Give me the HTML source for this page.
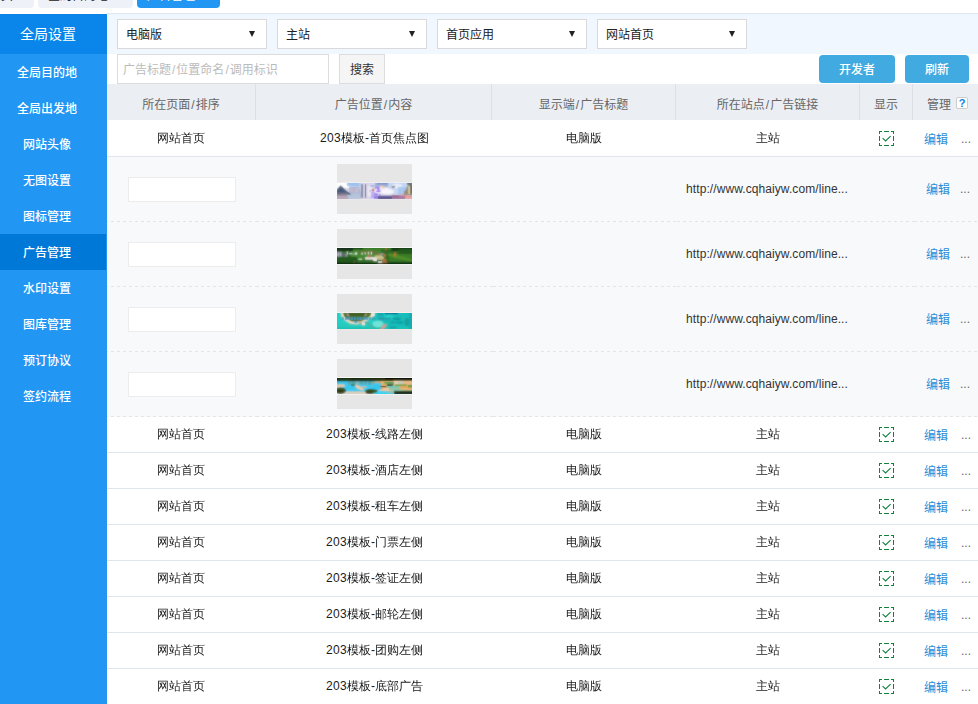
<!DOCTYPE html>
<html lang="zh-CN">
<head>
<meta charset="utf-8">
<title>广告管理</title>
<style>
*{box-sizing:border-box;margin:0;padding:0}
html,body{width:978px;height:704px;overflow:hidden;background:#fff}
body{font-family:"Liberation Sans","Noto Sans CJK SC",sans-serif;font-size:12px;color:#333;position:relative}
a{text-decoration:none;color:inherit}
ul{list-style:none}
/* top tabs */
.tabs{position:absolute;left:0;top:0;width:978px;height:13px}
.tab{position:absolute;top:-22px;height:30px;border-radius:0 0 4px 4px;background:#eef1f8;color:#222;font-size:12px;line-height:30px;text-align:left;padding-left:10px;overflow:hidden;white-space:nowrap}
.tab span{position:relative;top:3px;display:block}
.tab.t1{left:-21px;width:55px}
.tab.t2{left:38px;width:95px}
.tab.t3{left:137px;width:83px;background:#2196f3;color:#fff}
.topline{position:absolute;left:107px;top:13px;width:871px;height:1px;background:#dde6f3}
/* sidebar */
.side{position:absolute;left:0;top:14px;width:107px;height:690px;background:#2196f3;color:#fff;font-weight:500}
.side h2{height:40px;line-height:40px;width:96px;text-align:center;font-size:14px;font-weight:normal;background:#0a85e9;width:107px;padding-right:11px}
.side li{height:36px;width:106px;line-height:38px;text-align:center;padding-right:12px}
.side li.on{background:#0078d7}
/* filter */
.filter{position:absolute;left:107px;top:14px;width:871px;height:40px;background:#f0f7ff}
.sel{position:absolute;top:5px;width:150px;height:30px;border:1px solid #d9d9d9;background:#fff;line-height:30px;padding-left:8px;color:#222}
.sel i{position:absolute;left:131px;top:11px;width:0;height:0;border-left:3.5px solid transparent;border-right:3.5px solid transparent;border-top:6px solid #222}
.search{position:absolute;left:117px;top:54px;width:212px;height:30px;border:1px solid #dcdcdc;background:#fff;line-height:30px;padding-left:5px;color:#bbb}
.search i,th i{font-style:normal;margin:0 1px}
.sbtn{position:absolute;left:339px;top:54px;width:46px;height:30px;border:1px solid #dcdcde;background:#f5f5f5;line-height:30px;text-align:center;color:#333}
.btn{position:absolute;top:55px;height:28px;border-radius:4px;background:#41abe1;color:#fff;line-height:30px;text-align:center;font-weight:500}
.btn.b1{left:819px;width:76px}
.btn.b2{left:905px;width:64px}
/* table */
table{position:absolute;left:107px;top:84px;width:871px;border-collapse:separate;border-spacing:0;table-layout:fixed}
th{height:36px;background:#ebeef3;color:#666;font-weight:normal;text-align:center;border-left:1px solid #dcdfe5;padding:2px 0 0}
th:first-child{border-left:0}
td{text-align:center;padding:0;vertical-align:middle;white-space:nowrap;overflow:hidden}
tbody td{font-family:"Liberation Sans","WenQuanYi Zen Hei",sans-serif;color:#1a1a1a}
tr.r td{height:36px;border-bottom:1px solid #e1e6ee;background:#fff}
tr.r.first td{height:37px}
tr.s{background:repeating-linear-gradient(90deg,#e5e5e5 0,#e5e5e5 3px,transparent 3px,transparent 6px) -2px 64px/153px 1px no-repeat,repeating-linear-gradient(90deg,#e5e5e5 0,#e5e5e5 3px,transparent 3px,transparent 6px) 149px 64px/237px 1px no-repeat,repeating-linear-gradient(90deg,#e5e5e5 0,#e5e5e5 3px,transparent 3px,transparent 6px) 386px 64px/183px 1px no-repeat,repeating-linear-gradient(90deg,#e5e5e5 0,#e5e5e5 3px,transparent 3px,transparent 6px) 570px 64px/183px 1px no-repeat,repeating-linear-gradient(90deg,#e5e5e5 0,#e5e5e5 3px,transparent 3px,transparent 6px) 751px 64px/57px 1px no-repeat,repeating-linear-gradient(90deg,#e5e5e5 0,#e5e5e5 3px,transparent 3px,transparent 6px) 807px 64px/64px 1px no-repeat,#f8f9fb}
tr.s td{height:65px;padding-bottom:2px}
.ord{display:inline-block;width:108px;height:25px;border:1px solid #ececec;background:#fff;vertical-align:middle;position:relative;left:1px;top:1px}
.th{display:inline-block;width:75px;height:50px;background:#e6e6e6;vertical-align:middle;position:relative;left:0}
.strip{position:absolute;left:0;top:18px;display:block}
.lk{color:#333;letter-spacing:0.08px;position:relative;left:-1px}
.nm{display:inline-block;text-align:left;white-space:nowrap;position:relative;left:1px}
.dg{letter-spacing:0.33px}
tbody td:nth-child(2),tbody td:nth-child(3),tbody td:nth-child(4){padding-left:2px}
.ck{display:block;margin:0 auto;position:relative;left:1px;top:0}
td.c6{text-align:left;padding-left:12px;position:relative}
.ed{color:#2b8bd6;font-family:"Liberation Sans","Noto Sans CJK SC",sans-serif}
.more{color:#666;margin-left:13px;font-family:"Liberation Sans",sans-serif;position:relative;top:-1px}
tr.s .more{margin-left:10px}
tr.s td.c6{padding-left:14px}
.mg{margin-left:4px}
.help{display:inline-block;width:12px;height:12px;border:1px solid #ccc;border-radius:2px;background:#fff;color:#0f7fe0;font-family:"Liberation Sans",sans-serif;font-weight:bold;font-size:11px;line-height:11px;text-align:center;vertical-align:middle;margin-left:5px;position:relative;top:-2px}
</style>
</head>
<body>
<div class="tabs">
<a class="tab t1"><span>首页</span></a>
<a class="tab t2"><span>全局目的地</span></a>
<a class="tab t3"><span>广告管理</span></a>
</div>
<div class="topline"></div>
<div class="side">
<h2>全局设置</h2>
<ul>
<li><a>全局目的地</a></li>
<li><a>全局出发地</a></li>
<li><a>网站头像</a></li>
<li><a>无图设置</a></li>
<li><a>图标管理</a></li>
<li class="on"><a>广告管理</a></li>
<li><a>水印设置</a></li>
<li><a>图库管理</a></li>
<li><a>预订协议</a></li>
<li><a>签约流程</a></li>
</ul>
</div>
<div class="filter">
<div class="sel" style="left:10px">电脑版<i></i></div>
<div class="sel" style="left:170px">主站<i></i></div>
<div class="sel" style="left:330px">首页应用<i></i></div>
<div class="sel" style="left:490px">网站首页<i></i></div>
</div>
<div class="search">广告标题<i>/</i>位置命名<i>/</i>调用标识</div>
<div class="sbtn">搜索</div>
<a class="btn b1">开发者</a>
<a class="btn b2">刷新</a>
<table>
<colgroup><col style="width:148px"><col style="width:236px"><col style="width:184px"><col style="width:184px"><col style="width:53px"><col style="width:66px"></colgroup>
<thead><tr><th>所在页面<i>/</i>排序</th><th>广告位置<i>/</i>内容</th><th>显示端<i>/</i>广告标题</th><th>所在站点<i>/</i>广告链接</th><th>显示</th><th><span class="mg">管理</span><span class="help">?</span></th></tr></thead>
<tbody>
<tr class="r first"><td>网站首页</td><td><span class="nm" style="width:110px"><span class="dg">203</span>模板-首页焦点图</span></td><td>电脑版</td><td>主站</td><td class="c5"><svg class="ck" width="15" height="15" viewBox="0 0 15 15"><g fill="#12803d"><rect x="0" y="0" width="3" height="1"/><rect x="0" y="0" width="1" height="3"/><rect x="5" y="0" width="5" height="1"/><rect x="12" y="0" width="3" height="1"/><rect x="14" y="0" width="1" height="3"/><rect x="0" y="5" width="1" height="5"/><rect x="14" y="5" width="1" height="5"/><rect x="0" y="12" width="1" height="3"/><rect x="0" y="14" width="3" height="1"/><rect x="5" y="14" width="5" height="1"/><rect x="12" y="14" width="3" height="1"/><rect x="14" y="12" width="1" height="3"/></g><polyline points="3.6,7.2 6.6,10 11.6,5.1" fill="none" stroke="#12803d" stroke-width="1.1"/></svg></td><td class="c6"><a class="ed">编辑</a><span class="more">...</span></td></tr>
<tr class="s"><td><span class="ord"></span></td><td><span class="th"><svg class="strip" width="75" height="18" viewBox="0 -1 75 18"><defs><filter id="bl1" x="-10%" y="-30%" width="120%" height="160%"><feGaussianBlur stdDeviation="0.9"/></filter><clipPath id="cp1"><rect x="0" y="0" width="75" height="16"/></clipPath></defs><rect x="0" y="-1" width="75" height="1" fill="#eeeef2"/><rect x="0" y="16" width="75" height="1" fill="#e9e7ec"/><g clip-path="url(#cp1)"><g id="sh1"><rect x="-2" y="-2" width="79" height="20" fill="#d5d9ec"/><rect x="-2" y="-2" width="14" height="7" fill="#ffffff"/><rect x="10" y="-2" width="14" height="5" fill="#9dc2ee"/><rect x="22" y="-2" width="16" height="5" fill="#b9cdf0"/><polygon points="12,4 22,3.5 24,11 12,11" fill="#a9b6de"/><polygon points="12,6 16,5 17,9 13,10" fill="#c9b8c8"/><polygon points="18,5 21,5 21,9 18,10" fill="#e0c0b0" opacity="0.7"/><rect x="10" y="10.5" width="15" height="6" fill="#b7c5da"/><polygon points="-1,8 2,4 3.6,2.6 5.5,4 9,7.5 14.5,11.6 -1,12" fill="#4b5b7b"/><rect x="-1" y="9" width="11" height="5" fill="#8f8496" opacity="0.85"/><rect x="-1" y="13" width="12" height="4" fill="#b9a7b8"/><rect x="24" y="-1" width="14" height="18" fill="#dcd8ec"/><rect x="30" y="3" width="7" height="10" fill="#ece8f4"/><rect x="33.5" y="2" width="4" height="2" fill="#9fb4e4"/><rect x="32.5" y="7.3" width="2" height="1" fill="#7f8fe0"/><rect x="34" y="9" width="4" height="6" fill="#9a84f0" opacity="0.55"/><rect x="38" y="-1" width="14" height="5" fill="#9fb2dc"/><rect x="40" y="-1" width="12" height="2.4" fill="#7b95c6"/><polygon points="42,2.4 47,3 49,5.4 44,5" fill="#f0c9b4"/><rect x="38" y="4" width="7" height="11" fill="#efeaf6"/><rect x="38" y="4.2" width="3" height="1.4" fill="#8a6cf0"/><rect x="40.8" y="4" width="1.6" height="4.6" fill="#9a6cf6"/><rect x="39.4" y="7.6" width="4.6" height="1.4" fill="#9a70f6"/><rect x="37.5" y="10.4" width="3.4" height="2.2" fill="#8f78ee"/><rect x="41.8" y="10.6" width="2" height="2.2" fill="#b49cf0"/><rect x="37" y="13" width="4" height="3" fill="#8a64ea" opacity="0.8"/><ellipse cx="52" cy="8" rx="8" ry="3.4" fill="#f6f3fa"/><rect x="51" y="-1" width="24" height="12" fill="#c2d6f4" opacity="0.9"/><ellipse cx="50" cy="8.5" rx="7" ry="3" fill="#f8f5fb"/><ellipse cx="60" cy="3" rx="5" ry="2.4" fill="#e8eefb"/><rect x="61" y="4" width="9" height="7" fill="#a9c8f0"/><polygon points="54.5,3.2 57.5,2.6 58,4.6 55,5.2" fill="#8f857f"/><rect x="41" y="12.6" width="16" height="3.4" fill="#6a5c9c"/><rect x="41" y="14.4" width="14" height="1.6" fill="#3f3a82"/><rect x="55" y="12" width="14" height="4" fill="#9d6a94"/><rect x="62" y="11.6" width="8" height="2.2" fill="#c48aa4"/><rect x="68" y="12.4" width="8" height="3.6" fill="#ea9f98"/><polygon points="66.5,11.5 70,4 71.5,1 76,1 76,12.5" fill="#8a8f7c"/><rect x="71.2" y="3" width="2" height="8" fill="#e6cdb0"/><rect x="73.4" y="1.6" width="2.6" height="9" fill="#54634a"/><rect x="70" y="-1" width="6" height="2.6" fill="#6c6a72"/><rect x="67" y="8" width="3.4" height="3.4" fill="#9a8a6a"/><rect x="24.3" y="1.2" width="1.5" height="13.6" fill="#666c8a"/><rect x="28" y="1.2" width="1.1" height="13.6" fill="#5c6180"/><rect x="35.4" y="5.6" width="1.5" height="2.8" fill="#d23434"/><rect x="40.8" y="4.4" width="1.3" height="4" fill="#9a6cf6" opacity="0.7"/><rect x="39.6" y="7.8" width="4.2" height="1" fill="#9a70f6" opacity="0.7"/><polygon points="0,7.6 2.4,4.4 3.6,3 5,4.2 8,7.4 12,10.6 0,10.8" fill="#46577a" opacity="0.6"/><rect x="42" y="14.6" width="12" height="1.2" fill="#2a2672" opacity="0.5"/></g><use href="#sh1" filter="url(#bl1)" opacity="0.6"/></g></svg></span></td><td></td><td><span class="lk">http://www.cqhaiyw.com/line...</span></td><td class="c5"></td><td class="c6"><a class="ed">编辑</a><span class="more">...</span></td></tr>
<tr class="s"><td><span class="ord"></span></td><td><span class="th"><svg class="strip" width="75" height="18" viewBox="0 -1 75 18"><defs><filter id="bl2" x="-10%" y="-30%" width="120%" height="160%"><feGaussianBlur stdDeviation="0.9"/></filter><clipPath id="cp2"><rect x="0" y="0" width="75" height="16"/></clipPath></defs><rect x="0" y="-1" width="75" height="1" fill="#f8f8f8"/><rect x="0" y="16" width="75" height="1" fill="#f1f1f1"/><g clip-path="url(#cp2)"><g id="sh2"><rect x="-2" y="-2" width="79" height="20" fill="#2f6a24"/><rect x="-2" y="-2" width="79" height="5" fill="#1f4a1c"/><rect x="14" y="1.5" width="30" height="11" fill="#41852c"/><rect x="26" y="-1" width="28" height="3.4" fill="#3f7f2a"/><rect x="-2" y="-2" width="18" height="5" fill="#16301a"/><rect x="55" y="-2" width="22" height="5" fill="#173c17"/><rect x="-2" y="9" width="22" height="8" fill="#245a1e"/><rect x="-2" y="14.6" width="79" height="3" fill="#0f2f10"/><rect x="52" y="6" width="24" height="7" fill="#3f7f28" opacity="0.85"/><polygon points="52,5 60,7 75,11.5 75,13.5 58,10 50,7" fill="#5a982f" opacity="0.7"/><rect x="62" y="1" width="14" height="5" fill="#245a1c"/><rect x="20" y="12" width="24" height="3" fill="#2a6420"/><rect x="-1" y="3.8" width="6" height="5" fill="#7f8394"/><rect x="0.4" y="4.6" width="1.2" height="3.6" fill="#c6c8d2"/><rect x="2.6" y="4.6" width="1.6" height="3" fill="#b4b6c4"/><rect x="5.4" y="5" width="3.6" height="3.6" fill="#5e6a70"/><rect x="8.6" y="6" width="1.6" height="2.8" fill="#8e9aa0"/><rect x="12" y="5" width="3" height="1.2" fill="#cfd8d0"/><rect x="14.6" y="5.6" width="3.4" height="0.9" fill="#b7c8b4"/><rect x="23" y="3.3" width="15.5" height="1.3" fill="#8a5a3c" opacity="0.85"/><rect x="24.2" y="4.6" width="1.8" height="2" fill="#cfdccc"/><rect x="30.2" y="7.2" width="4.4" height="2.6" fill="#a9763f"/><rect x="28.2" y="9" width="9.6" height="2.6" fill="#e8e0dc"/><rect x="36" y="10.4" width="3" height="2.4" fill="#efe9e6"/><rect x="21.6" y="10.6" width="3.4" height="1.3" fill="#dfe3d0"/><polygon points="37.5,7.5 44,7 47.5,9.5 46,12 38,11.2" fill="#c9c28f"/><rect x="37" y="10" width="3" height="3.2" fill="#ece8ea"/><rect x="41" y="13" width="4" height="2.4" fill="#d7d2c8"/><rect x="43.6" y="5" width="3" height="2.4" fill="#8f969c"/><rect x="37" y="4.6" width="6" height="1.2" fill="#7a6a58"/><rect x="41" y="6" width="2" height="1.6" fill="#c77a3c"/><rect x="45.6" y="10.6" width="3.6" height="2.6" fill="#b96f3c"/><rect x="45" y="13" width="5" height="2.6" fill="#9c6a44"/><rect x="16.6" y="13" width="1.2" height="2" fill="#8c6a3a" opacity="0.7"/><rect x="9.8" y="3.6" width="1.2" height="2.8" fill="#e6e8e8"/><rect x="18" y="4.4" width="2.2" height="2.2" fill="#eeeeee"/><rect x="27.6" y="4" width="1.1" height="2.6" fill="#e9ece6"/><rect x="30.8" y="3.8" width="1.1" height="2.8" fill="#f4f4f0"/><rect x="33.8" y="3.8" width="1.2" height="2.8" fill="#f2f2ee"/><rect x="47.9" y="0.2" width="1.8" height="2" fill="#b5683a"/><rect x="46.8" y="6.2" width="2" height="2.4" fill="#c7763a"/><rect x="57" y="4.6" width="2.2" height="3.8" fill="#c4722f"/><rect x="30.4" y="7.4" width="4" height="2.2" fill="#a9763f" opacity="0.7"/><rect x="28.6" y="9.4" width="9" height="1.8" fill="#ece6e2" opacity="0.7"/><rect x="0" y="15" width="75" height="1" fill="#0a240c" opacity="0.7"/></g><use href="#sh2" filter="url(#bl2)" opacity="0.6"/></g></svg></span></td><td></td><td><span class="lk">http://www.cqhaiyw.com/line...</span></td><td class="c5"></td><td class="c6"><a class="ed">编辑</a><span class="more">...</span></td></tr>
<tr class="s"><td><span class="ord"></span></td><td><span class="th"><svg class="strip" width="75" height="18" viewBox="0 -1 75 18"><defs><filter id="bl3" x="-10%" y="-30%" width="120%" height="160%"><feGaussianBlur stdDeviation="0.9"/></filter><clipPath id="cp3"><rect x="0" y="0" width="75" height="16"/></clipPath></defs><rect x="0" y="-1" width="75" height="1" fill="#f6eeee"/><rect x="0" y="16" width="75" height="1" fill="#f0e6e6"/><g clip-path="url(#cp3)"><g id="sh3"><rect x="-2" y="-2" width="79" height="20" fill="#1cc4be"/><rect x="-2" y="-2" width="40" height="20" fill="#22cfc6"/><rect x="38" y="-2" width="40" height="20" fill="#16bdba"/><rect x="-2" y="10" width="40" height="8" fill="#25cbbf"/><rect x="-2" y="14.4" width="79" height="3" fill="#1fc2b4"/><polygon points="3.6,-1 38,-1 37.5,2.4 33,6.6 27,9.6 20,11.4 13,10.4 8,7.6 4.6,3.6" fill="#eadfc6"/><polygon points="6,-1 35,-1 33.5,2.2 30,5.4 26,7.6 21,8.6 15,8.4 10,6 7,3" fill="#4f6d22"/><rect x="9" y="0" width="20" height="3" fill="#42601c"/><polygon points="9,0 11,0 12.6,3.4 10.8,3.6" fill="#b79c98"/><polygon points="28.6,0.6 30.6,0.8 28.4,3.4 27,3" fill="#b69a8a"/><rect x="34" y="0" width="3.6" height="3" fill="#f2ece0"/><rect x="21" y="8" width="4" height="2.6" fill="#c4b39a"/><rect x="17.6" y="8.4" width="2.6" height="1.7" fill="#1f9cec"/><rect x="25" y="9.6" width="3" height="2.6" fill="#f0ece0"/><rect x="4.6" y="4.2" width="2.2" height="2.6" fill="#4aa0b8"/><rect x="8" y="4.2" width="2.2" height="2.6" fill="#3d9cc6"/><rect x="10.8" y="4.2" width="2.4" height="2.6" fill="#3d9cc6"/><rect x="13.8" y="4.2" width="2.2" height="2.6" fill="#3d9cc6"/><rect x="16.8" y="4.2" width="2" height="2.6" fill="#3d9cc6"/><rect x="19.8" y="4.2" width="2" height="2.6" fill="#3d9cc6"/><rect x="22.6" y="4.2" width="2.4" height="2.8" fill="#3d9cc6"/><rect x="25.8" y="4.2" width="2.6" height="2.6" fill="#3d9cc6"/><rect x="29" y="4.2" width="2.4" height="2.6" fill="#4aa4c0"/><rect x="32" y="4.2" width="2.4" height="2.6" fill="#3ea2b4"/><rect x="35" y="4.4" width="3" height="2.4" fill="#27a6b0"/><rect x="41.6" y="4.5" width="2.4" height="2.3" fill="#2a92a4"/><rect x="44.6" y="4.5" width="2.4" height="2.3" fill="#2a92a4"/><rect x="47.6" y="4.5" width="2.2" height="2.3" fill="#2d96a6"/><rect x="50.6" y="4.5" width="2.4" height="2.3" fill="#2d96a6"/><ellipse cx="41" cy="11" rx="5.6" ry="3.4" fill="#6fe4d8"/><polygon points="27,9 28,8.6 38.4,14.4 37.6,15" fill="#7f8f86" opacity="0.8"/><polygon points="43.4,15.6 46.6,11.2 50,11 49.4,13 46.6,16.4 43,16.4" fill="#cf9f90"/><rect x="48" y="-1" width="13" height="2.2" fill="#0b6f8e"/><rect x="41" y="0.6" width="5" height="1.6" fill="#0f9aa6"/><ellipse cx="60" cy="6" rx="4" ry="1.4" fill="#0e9fa6"/><ellipse cx="63" cy="9.6" rx="4" ry="1.3" fill="#0fa2a8"/><ellipse cx="56" cy="9.4" rx="3" ry="1.2" fill="#10a4aa"/><ellipse cx="70" cy="9" rx="2.4" ry="4" fill="#14a0a0"/><rect x="72" y="-1" width="4" height="18" fill="#12a8ae" opacity="0.7"/><ellipse cx="56" cy="14.4" rx="4" ry="1.2" fill="#12a6a6"/><ellipse cx="52" cy="3" rx="5" ry="1.6" fill="#20d2cc"/><rect x="17.8" y="8.5" width="2.2" height="1.5" fill="#1f9cec"/><rect x="8" y="4.3" width="2" height="2.3" fill="#3d9cc6" opacity="0.8"/><rect x="10.9" y="4.3" width="2.1" height="2.3" fill="#3d9cc6" opacity="0.8"/><rect x="13.9" y="4.3" width="2" height="2.3" fill="#3d9cc6" opacity="0.8"/><rect x="16.9" y="4.3" width="1.8" height="2.3" fill="#3d9cc6" opacity="0.8"/><rect x="19.9" y="4.3" width="1.8" height="2.3" fill="#3d9cc6" opacity="0.8"/><rect x="22.7" y="4.3" width="2.2" height="2.5" fill="#3d9cc6" opacity="0.8"/><rect x="25.9" y="4.3" width="2.4" height="2.3" fill="#3d9cc6" opacity="0.8"/><rect x="29" y="4.3" width="2.2" height="2.3" fill="#4aa4c0" opacity="0.8"/><rect x="48" y="0" width="12" height="1" fill="#0b6f8e" opacity="0.7"/></g><use href="#sh3" filter="url(#bl3)" opacity="0.6"/></g></svg></span></td><td></td><td><span class="lk">http://www.cqhaiyw.com/line...</span></td><td class="c5"></td><td class="c6"><a class="ed">编辑</a><span class="more">...</span></td></tr>
<tr class="s"><td><span class="ord"></span></td><td><span class="th"><svg class="strip" width="75" height="18" viewBox="0 -1 75 18"><defs><filter id="bl4" x="-10%" y="-30%" width="120%" height="160%"><feGaussianBlur stdDeviation="0.9"/></filter><clipPath id="cp4"><rect x="0" y="0" width="75" height="16"/></clipPath></defs><rect x="0" y="-1" width="75" height="1" fill="#f8f8f8"/><rect x="0" y="16" width="75" height="1" fill="#f0f0f0"/><g clip-path="url(#cp4)"><g id="sh4"><rect x="-2" y="-2" width="79" height="20" fill="#7fd0d6"/><rect x="-2" y="3" width="46" height="11" fill="#3ac8f0"/><rect x="-2" y="12.6" width="46" height="5" fill="#d9d6d2"/><rect x="10" y="13" width="28" height="3" fill="#e6cdb4" opacity="0.8"/><rect x="6" y="10" width="30" height="3.4" fill="#35c8f2"/><rect x="-1" y="6.4" width="8.6" height="2.6" fill="#efc9a6"/><polygon points="17,6.6 22,7.4 27.6,11.6 25,12.4 20,10.4 18,8" fill="#f0cba6"/><rect x="24" y="8.4" width="6" height="1.2" fill="#e8c296"/><rect x="-1" y="9" width="6" height="1.6" fill="#9ad8e8"/><rect x="11" y="3" width="3.6" height="3.6" fill="#5aa9b4"/><rect x="15" y="3" width="3.4" height="3.6" fill="#4fa4b0"/><rect x="18.8" y="3.2" width="3" height="3.4" fill="#86b7b4"/><rect x="22.4" y="3" width="3.4" height="3.6" fill="#56a8b4"/><rect x="26.6" y="3.2" width="3.4" height="3.4" fill="#5aa8b2"/><rect x="31" y="3" width="3.6" height="3.6" fill="#57a6b0"/><rect x="35" y="3.2" width="3" height="3.4" fill="#7fb4a8"/><rect x="14" y="6.4" width="4" height="1.4" fill="#2f5a2a" opacity="0.8"/><rect x="-2" y="-2" width="79" height="5.2" fill="#1f3210"/><rect x="-2" y="-2" width="40" height="3.2" fill="#23380f"/><rect x="4" y="0.6" width="10" height="1.8" fill="#3a4a12"/><rect x="14" y="-1" width="8" height="2" fill="#0e1a06"/><rect x="48" y="-2" width="30" height="3.6" fill="#070b03"/><rect x="38" y="0.6" width="14" height="2.4" fill="#2a3a10"/><ellipse cx="3.6" cy="12.6" rx="5.4" ry="3" fill="#3f4d14"/><ellipse cx="3" cy="13.6" rx="4" ry="1.8" fill="#1f260a"/><ellipse cx="33.6" cy="13.4" rx="5.4" ry="2.4" fill="#3c5216"/><ellipse cx="32" cy="14.4" rx="3" ry="1.2" fill="#1c2808"/><rect x="44" y="3" width="32" height="10.4" fill="#e6b273"/><rect x="56" y="2.6" width="20" height="3" fill="#eebf8c"/><rect x="57" y="3.4" width="9" height="2.2" fill="#f3dcc0"/><rect x="61" y="4.2" width="5" height="1.2" fill="#9cd0d4"/><rect x="38" y="3.4" width="6" height="1.6" fill="#e6a75c"/><rect x="47" y="4" width="10" height="2.4" fill="#5c9c4e"/><rect x="51" y="5" width="6" height="1.6" fill="#3fa27a"/><rect x="37" y="5.4" width="7" height="7" fill="#37c6ee"/><rect x="44" y="5.4" width="5" height="1.4" fill="#d9b45c"/><rect x="50" y="6.6" width="6" height="1.4" fill="#2f2a0e"/><rect x="43.4" y="8" width="6" height="1.2" fill="#33401a"/><rect x="50" y="7.6" width="12" height="2.8" fill="#76cbbc"/><rect x="58" y="6.4" width="12" height="1.8" fill="#6fa44a"/><rect x="64" y="8" width="12" height="2" fill="#eaa45c"/><rect x="71" y="7" width="5" height="2.4" fill="#5a9a3a"/><rect x="52" y="10.4" width="12" height="1.6" fill="#8fc8a4"/><rect x="46" y="10" width="6" height="2" fill="#f0c9a0"/><rect x="64" y="10.4" width="12" height="1.6" fill="#f0b878"/><rect x="42" y="11.8" width="10" height="1.6" fill="#efc59c"/><rect x="52" y="12" width="12" height="1.4" fill="#9fd6c8"/><rect x="64" y="12" width="12" height="1.2" fill="#7fc4a0"/><rect x="36.6" y="13" width="21" height="4" fill="#33d3f2"/><rect x="50" y="13.4" width="8" height="1.2" fill="#e8a868"/><ellipse cx="37.6" cy="13" rx="2.8" ry="1.6" fill="#3e5418"/><rect x="57" y="12.8" width="20" height="4" fill="#2c3c12"/><rect x="58" y="14" width="18" height="3" fill="#16200a"/><rect x="57.2" y="12.6" width="1.2" height="1.4" fill="#3a5a8a"/><rect x="0" y="0" width="75" height="2.2" fill="#1a2a0c" opacity="0.8"/><rect x="48" y="0" width="27" height="1.6" fill="#050803"/><ellipse cx="3.6" cy="12.8" rx="4.6" ry="2.4" fill="#364412" opacity="0.7"/><ellipse cx="33.6" cy="13.6" rx="4.6" ry="1.9" fill="#34480f" opacity="0.7"/><rect x="58" y="14" width="17" height="2" fill="#16200a" opacity="0.8"/><rect x="50" y="6.8" width="5.4" height="1" fill="#2f2a0e" opacity="0.7"/></g><use href="#sh4" filter="url(#bl4)" opacity="0.6"/></g></svg></span></td><td></td><td><span class="lk">http://www.cqhaiyw.com/line...</span></td><td class="c5"></td><td class="c6"><a class="ed">编辑</a><span class="more">...</span></td></tr>
<tr class="r"><td>网站首页</td><td><span class="nm" style="width:98px"><span class="dg">203</span>模板-线路左侧</span></td><td>电脑版</td><td>主站</td><td class="c5"><svg class="ck" width="15" height="15" viewBox="0 0 15 15"><g fill="#12803d"><rect x="0" y="0" width="3" height="1"/><rect x="0" y="0" width="1" height="3"/><rect x="5" y="0" width="5" height="1"/><rect x="12" y="0" width="3" height="1"/><rect x="14" y="0" width="1" height="3"/><rect x="0" y="5" width="1" height="5"/><rect x="14" y="5" width="1" height="5"/><rect x="0" y="12" width="1" height="3"/><rect x="0" y="14" width="3" height="1"/><rect x="5" y="14" width="5" height="1"/><rect x="12" y="14" width="3" height="1"/><rect x="14" y="12" width="1" height="3"/></g><polyline points="3.6,7.2 6.6,10 11.6,5.1" fill="none" stroke="#12803d" stroke-width="1.1"/></svg></td><td class="c6"><a class="ed">编辑</a><span class="more">...</span></td></tr>
<tr class="r"><td>网站首页</td><td><span class="nm" style="width:98px"><span class="dg">203</span>模板-酒店左侧</span></td><td>电脑版</td><td>主站</td><td class="c5"><svg class="ck" width="15" height="15" viewBox="0 0 15 15"><g fill="#12803d"><rect x="0" y="0" width="3" height="1"/><rect x="0" y="0" width="1" height="3"/><rect x="5" y="0" width="5" height="1"/><rect x="12" y="0" width="3" height="1"/><rect x="14" y="0" width="1" height="3"/><rect x="0" y="5" width="1" height="5"/><rect x="14" y="5" width="1" height="5"/><rect x="0" y="12" width="1" height="3"/><rect x="0" y="14" width="3" height="1"/><rect x="5" y="14" width="5" height="1"/><rect x="12" y="14" width="3" height="1"/><rect x="14" y="12" width="1" height="3"/></g><polyline points="3.6,7.2 6.6,10 11.6,5.1" fill="none" stroke="#12803d" stroke-width="1.1"/></svg></td><td class="c6"><a class="ed">编辑</a><span class="more">...</span></td></tr>
<tr class="r"><td>网站首页</td><td><span class="nm" style="width:98px"><span class="dg">203</span>模板-租车左侧</span></td><td>电脑版</td><td>主站</td><td class="c5"><svg class="ck" width="15" height="15" viewBox="0 0 15 15"><g fill="#12803d"><rect x="0" y="0" width="3" height="1"/><rect x="0" y="0" width="1" height="3"/><rect x="5" y="0" width="5" height="1"/><rect x="12" y="0" width="3" height="1"/><rect x="14" y="0" width="1" height="3"/><rect x="0" y="5" width="1" height="5"/><rect x="14" y="5" width="1" height="5"/><rect x="0" y="12" width="1" height="3"/><rect x="0" y="14" width="3" height="1"/><rect x="5" y="14" width="5" height="1"/><rect x="12" y="14" width="3" height="1"/><rect x="14" y="12" width="1" height="3"/></g><polyline points="3.6,7.2 6.6,10 11.6,5.1" fill="none" stroke="#12803d" stroke-width="1.1"/></svg></td><td class="c6"><a class="ed">编辑</a><span class="more">...</span></td></tr>
<tr class="r"><td>网站首页</td><td><span class="nm" style="width:98px"><span class="dg">203</span>模板-门票左侧</span></td><td>电脑版</td><td>主站</td><td class="c5"><svg class="ck" width="15" height="15" viewBox="0 0 15 15"><g fill="#12803d"><rect x="0" y="0" width="3" height="1"/><rect x="0" y="0" width="1" height="3"/><rect x="5" y="0" width="5" height="1"/><rect x="12" y="0" width="3" height="1"/><rect x="14" y="0" width="1" height="3"/><rect x="0" y="5" width="1" height="5"/><rect x="14" y="5" width="1" height="5"/><rect x="0" y="12" width="1" height="3"/><rect x="0" y="14" width="3" height="1"/><rect x="5" y="14" width="5" height="1"/><rect x="12" y="14" width="3" height="1"/><rect x="14" y="12" width="1" height="3"/></g><polyline points="3.6,7.2 6.6,10 11.6,5.1" fill="none" stroke="#12803d" stroke-width="1.1"/></svg></td><td class="c6"><a class="ed">编辑</a><span class="more">...</span></td></tr>
<tr class="r"><td>网站首页</td><td><span class="nm" style="width:98px"><span class="dg">203</span>模板-签证左侧</span></td><td>电脑版</td><td>主站</td><td class="c5"><svg class="ck" width="15" height="15" viewBox="0 0 15 15"><g fill="#12803d"><rect x="0" y="0" width="3" height="1"/><rect x="0" y="0" width="1" height="3"/><rect x="5" y="0" width="5" height="1"/><rect x="12" y="0" width="3" height="1"/><rect x="14" y="0" width="1" height="3"/><rect x="0" y="5" width="1" height="5"/><rect x="14" y="5" width="1" height="5"/><rect x="0" y="12" width="1" height="3"/><rect x="0" y="14" width="3" height="1"/><rect x="5" y="14" width="5" height="1"/><rect x="12" y="14" width="3" height="1"/><rect x="14" y="12" width="1" height="3"/></g><polyline points="3.6,7.2 6.6,10 11.6,5.1" fill="none" stroke="#12803d" stroke-width="1.1"/></svg></td><td class="c6"><a class="ed">编辑</a><span class="more">...</span></td></tr>
<tr class="r"><td>网站首页</td><td><span class="nm" style="width:98px"><span class="dg">203</span>模板-邮轮左侧</span></td><td>电脑版</td><td>主站</td><td class="c5"><svg class="ck" width="15" height="15" viewBox="0 0 15 15"><g fill="#12803d"><rect x="0" y="0" width="3" height="1"/><rect x="0" y="0" width="1" height="3"/><rect x="5" y="0" width="5" height="1"/><rect x="12" y="0" width="3" height="1"/><rect x="14" y="0" width="1" height="3"/><rect x="0" y="5" width="1" height="5"/><rect x="14" y="5" width="1" height="5"/><rect x="0" y="12" width="1" height="3"/><rect x="0" y="14" width="3" height="1"/><rect x="5" y="14" width="5" height="1"/><rect x="12" y="14" width="3" height="1"/><rect x="14" y="12" width="1" height="3"/></g><polyline points="3.6,7.2 6.6,10 11.6,5.1" fill="none" stroke="#12803d" stroke-width="1.1"/></svg></td><td class="c6"><a class="ed">编辑</a><span class="more">...</span></td></tr>
<tr class="r"><td>网站首页</td><td><span class="nm" style="width:98px"><span class="dg">203</span>模板-团购左侧</span></td><td>电脑版</td><td>主站</td><td class="c5"><svg class="ck" width="15" height="15" viewBox="0 0 15 15"><g fill="#12803d"><rect x="0" y="0" width="3" height="1"/><rect x="0" y="0" width="1" height="3"/><rect x="5" y="0" width="5" height="1"/><rect x="12" y="0" width="3" height="1"/><rect x="14" y="0" width="1" height="3"/><rect x="0" y="5" width="1" height="5"/><rect x="14" y="5" width="1" height="5"/><rect x="0" y="12" width="1" height="3"/><rect x="0" y="14" width="3" height="1"/><rect x="5" y="14" width="5" height="1"/><rect x="12" y="14" width="3" height="1"/><rect x="14" y="12" width="1" height="3"/></g><polyline points="3.6,7.2 6.6,10 11.6,5.1" fill="none" stroke="#12803d" stroke-width="1.1"/></svg></td><td class="c6"><a class="ed">编辑</a><span class="more">...</span></td></tr>
<tr class="r"><td>网站首页</td><td><span class="nm" style="width:98px"><span class="dg">203</span>模板-底部广告</span></td><td>电脑版</td><td>主站</td><td class="c5"><svg class="ck" width="15" height="15" viewBox="0 0 15 15"><g fill="#12803d"><rect x="0" y="0" width="3" height="1"/><rect x="0" y="0" width="1" height="3"/><rect x="5" y="0" width="5" height="1"/><rect x="12" y="0" width="3" height="1"/><rect x="14" y="0" width="1" height="3"/><rect x="0" y="5" width="1" height="5"/><rect x="14" y="5" width="1" height="5"/><rect x="0" y="12" width="1" height="3"/><rect x="0" y="14" width="3" height="1"/><rect x="5" y="14" width="5" height="1"/><rect x="12" y="14" width="3" height="1"/><rect x="14" y="12" width="1" height="3"/></g><polyline points="3.6,7.2 6.6,10 11.6,5.1" fill="none" stroke="#12803d" stroke-width="1.1"/></svg></td><td class="c6"><a class="ed">编辑</a><span class="more">...</span></td></tr>
</tbody>
</table>
</body>
</html>
